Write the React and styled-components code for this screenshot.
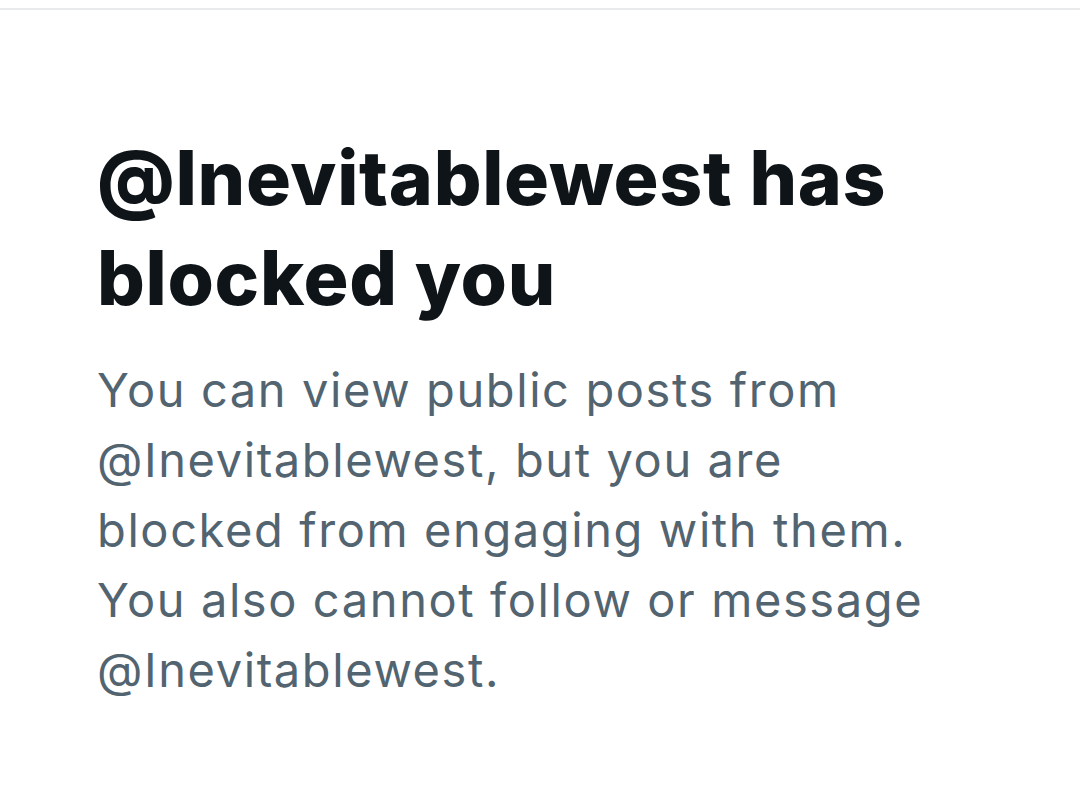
import React from 'react';
import styled, { createGlobalStyle } from 'styled-components';

const GlobalStyle = createGlobalStyle`
  html, body {
    margin: 0;
    padding: 0;
    background: #fff;
  }
`;

const Page = styled.div`
  width: 1080px;
  height: 812px;
  box-sizing: border-box;
  padding-top: 8px;
  background: #fff;
  overflow: hidden;
`;

const Divider = styled.div`
  height: 2px;
  background: #e9eaeb;
`;

const Content = styled.div`
  display: flex;
  flex-direction: column;
  padding: 118px 40px 0 97px;
  font-family: Inter, "Noto Sans", sans-serif;
`;

const Title = styled.h1`
  margin: 0 0 27px;
  font-size: 75px;
  font-weight: 800;
  line-height: 100px;
  letter-spacing: 0.7px;
  color: #0f1419;
`;

const Message = styled.p`
  margin: 0;
  font-size: 47px;
  font-weight: 400;
  line-height: 70px;
  letter-spacing: 1.6px;
  color: #536471;
`;

function App() {
  const handle = '@Inevitablewest';

  return (
    <Page>
      <GlobalStyle />
      <Divider />
      <Content>
        <Title>
          {handle} has
          <br />
          blocked you
        </Title>
        <Message>
          You can view public posts from
          <br />
          {handle}, but you are
          <br />
          blocked from engaging with them.
          <br />
          You also cannot follow or message
          <br />
          {handle}.
        </Message>
      </Content>
    </Page>
  );
}

export default App;
